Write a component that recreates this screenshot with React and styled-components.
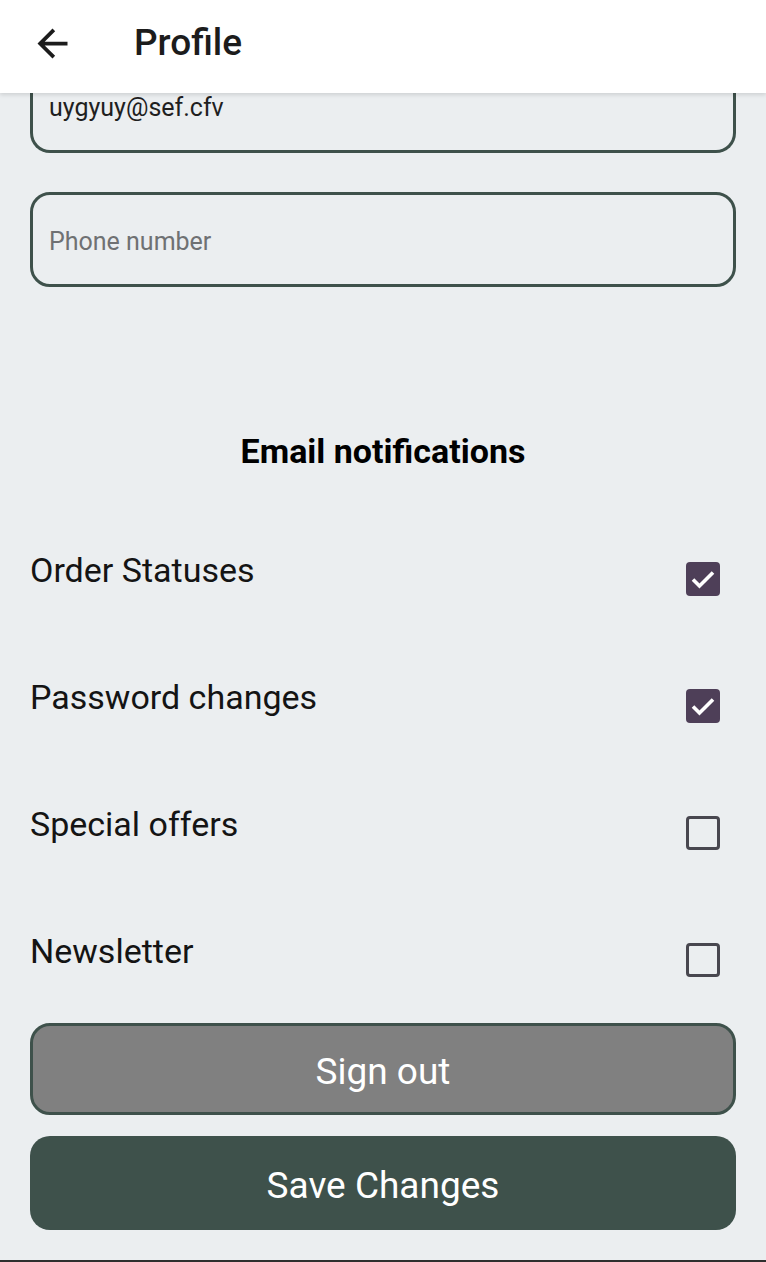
import styled, { createGlobalStyle } from "styled-components";

const GlobalStyle = createGlobalStyle`
    html, body {
        margin: 0;
        padding: 0;
        background: #ebeef0;
        font-family: Roboto, "Noto Sans", sans-serif;
    }
`;

const Screen = styled.div`
    width: 766px;
    height: 1262px;
    display: flex;
    flex-direction: column;
    background: #ebeef0;
    overflow: hidden;
    box-sizing: border-box;
    border-bottom: 2px solid #2e2e2e;
`;

const Header = styled.header`
    height: 93px;
    flex-shrink: 0;
    background: #ffffff;
    display: flex;
    align-items: center;
    box-shadow: 0 2px 4px rgba(0, 0, 0, 0.12);
    position: relative;
    z-index: 1;
`;

const BackButton = styled.button`
    width: 45px;
    height: 45px;
    margin: 0 0 6px 30px;
    padding: 0;
    border: none;
    background: none;
    display: flex;
    align-items: center;
    justify-content: center;
`;

const Title = styled.h1`
    margin: 0 0 8px 59px;
    font-size: 37px;
    font-weight: 500;
    color: #1c1c1c;
`;

const Content = styled.main`
    display: flex;
    flex-direction: column;
    padding: 0 30px;
`;

const Field = styled.div`
    box-sizing: border-box;
    height: ${(props) => (props.$cut ? "60px" : "95px")};
    margin-top: ${(props) => (props.$cut ? "0" : "39px")};
    border: 3px solid #3e514b;
    border-top: ${(props) => (props.$cut ? "none" : "3px solid #3e514b")};
    border-radius: ${(props) => (props.$cut ? "0 0 20px 20px" : "20px")};
    padding: 0 16px;
    display: flex;
    align-items: ${(props) => (props.$cut ? "flex-start" : "center")};
    padding-top: ${(props) => (props.$cut ? "0" : "4px")};
    font-size: 25px;
    color: ${(props) => (props.$placeholder ? "#6f7173" : "#1f1f1f")};
`;

const SectionTitle = styled.h2`
    margin: 146px 0 46px;
    text-align: center;
    font-size: 34px;
    line-height: 36px;
    font-weight: 700;
    color: #000000;
`;

const Row = styled.label`
    height: 127px;
    display: flex;
    align-items: center;
    justify-content: space-between;
    padding-right: 16px;
`;

const RowLabel = styled.span`
    font-size: 34px;
    color: #141414;
    margin-bottom: 18px;
`;

const Box = styled.span`
    box-sizing: border-box;
    width: 34px;
    height: 34px;
    border-radius: 4px;
    display: flex;
    align-items: center;
    justify-content: center;
    background: ${(props) => (props.$checked ? "#4e3f58" : "transparent")};
    border: ${(props) => (props.$checked ? "none" : "3.5px solid #48474f")};
`;

const Button = styled.button`
    box-sizing: border-box;
    width: 100%;
    height: ${(props) => (props.$primary ? "94px" : "92px")};
    margin-top: ${(props) => (props.$primary ? "21px" : "0")};
    padding-top: 6px;
    border-radius: 20px;
    border: ${(props) => (props.$primary ? "none" : "3px solid #3e514b")};
    background: ${(props) => (props.$primary ? "#3e514b" : "#808080")};
    color: #ffffff;
    font-family: Roboto, "Noto Sans", sans-serif;
    font-size: 37px;
    font-weight: 400;
`;

const notifications = [
    { label: "Order Statuses", checked: true },
    { label: "Password changes", checked: true },
    { label: "Special offers", checked: false },
    { label: "Newsletter", checked: false },
];

const Check = () => (
    <svg width="34" height="34" viewBox="0 0 34 34">
        <path d="M7 17.5l6.5 6.5L27 10.5" fill="none" stroke="#ffffff" strokeWidth="3.6" />
    </svg>
);

const App = () => (
    <Screen>
        <GlobalStyle />
        <Header>
            <BackButton aria-label="Back">
                <svg width="45" height="45" viewBox="0 0 24 24">
                    <path d="M20 11H7.83l5.59-5.59L12 4l-8 8 8 8 1.41-1.41L7.83 13H20v-2z" fill="#1c1c1c" />
                </svg>
            </BackButton>
            <Title>Profile</Title>
        </Header>
        <Content>
            <Field $cut>uygyuy@sef.cfv</Field>
            <Field $placeholder>Phone number</Field>
            <SectionTitle>Email notifications</SectionTitle>
            {notifications.map((item) => (
                <Row key={item.label}>
                    <RowLabel>{item.label}</RowLabel>
                    <Box $checked={item.checked}>{item.checked && <Check />}</Box>
                </Row>
            ))}
            <Button>Sign out</Button>
            <Button $primary>Save Changes</Button>
        </Content>
    </Screen>
);

export default App;
